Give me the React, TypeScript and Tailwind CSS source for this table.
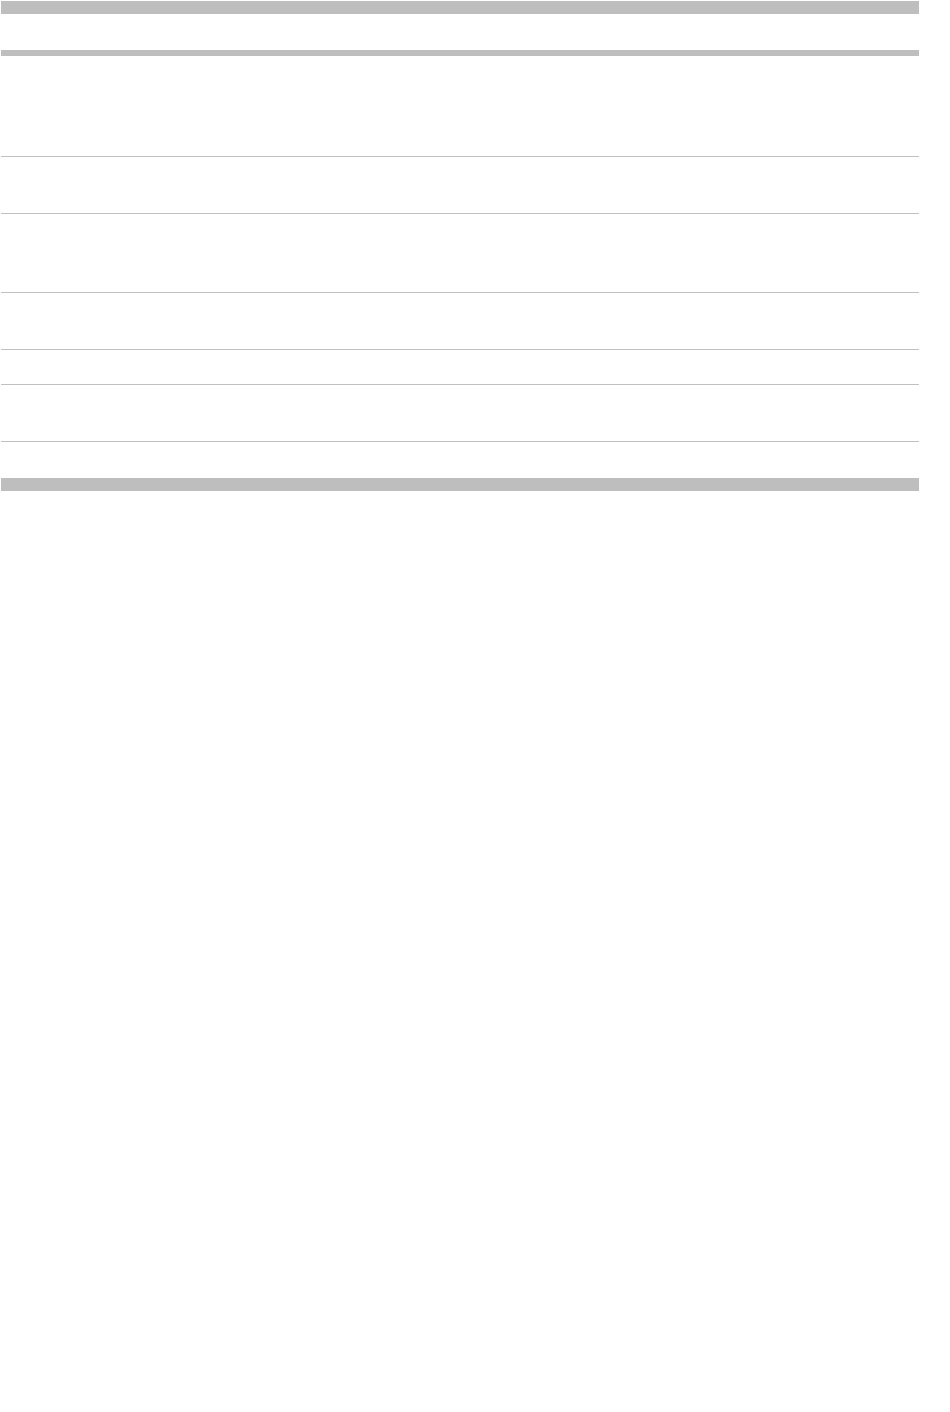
const rows = [100, 56, 78, 56, 34, 56];

const App = () => {
  return (
    <div className="min-h-screen bg-white pt-px pl-px">
      <div className="w-[918px] flex flex-col">
        <div className="h-[13px] bg-[#bebebe]" />
        <div className="h-[36px]" />
        <div className="h-[6px] bg-[#bebebe]" />
        {rows.map((h, i) => (
          <div key={i} className="flex flex-col">
            <div style={{ height: h }} />
            <div className="h-px bg-[#c0c0c0]" />
          </div>
        ))}
        <div className="h-[36px]" />
        <div className="h-[13px] bg-[#bebebe]" />
      </div>
    </div>
  );
};

export default App;
